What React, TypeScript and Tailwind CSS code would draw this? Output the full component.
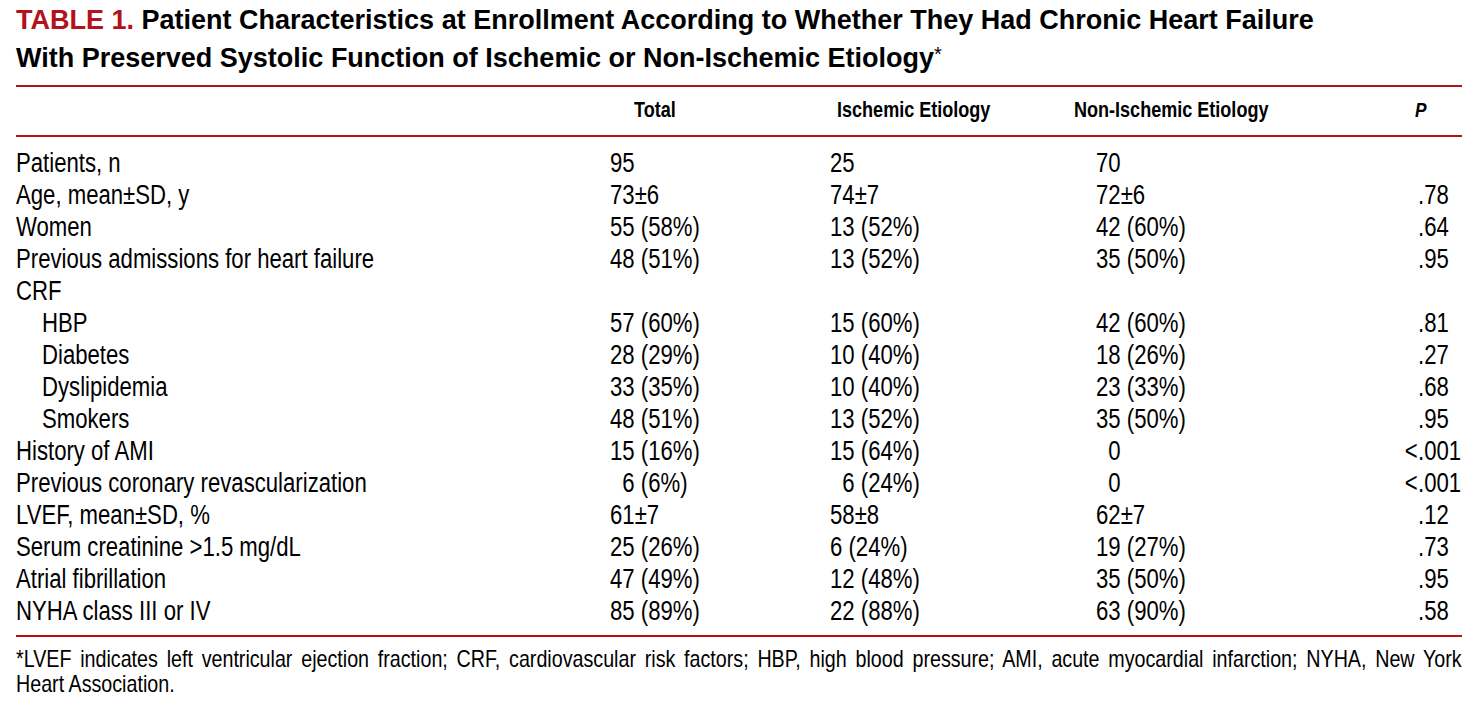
import React from 'react';

interface Row {
  label: string;
  indent?: boolean;
  total?: string;
  ischemic?: string;
  nonIschemic?: string;
  p?: string;
}

// figure space keeps single digits aligned with the units column
const FS = '\u2007';

const ROWS: Row[] = [
  { label: 'Patients, n', total: '95', ischemic: '25', nonIschemic: '70' },
  { label: 'Age, mean±SD, y', total: '73±6', ischemic: '74±7', nonIschemic: '72±6', p: '.78' },
  { label: 'Women', total: '55 (58%)', ischemic: '13 (52%)', nonIschemic: '42 (60%)', p: '.64' },
  { label: 'Previous admissions for heart failure', total: '48 (51%)', ischemic: '13 (52%)', nonIschemic: '35 (50%)', p: '.95' },
  { label: 'CRF' },
  { label: 'HBP', indent: true, total: '57 (60%)', ischemic: '15 (60%)', nonIschemic: '42 (60%)', p: '.81' },
  { label: 'Diabetes', indent: true, total: '28 (29%)', ischemic: '10 (40%)', nonIschemic: '18 (26%)', p: '.27' },
  { label: 'Dyslipidemia', indent: true, total: '33 (35%)', ischemic: '10 (40%)', nonIschemic: '23 (33%)', p: '.68' },
  { label: 'Smokers', indent: true, total: '48 (51%)', ischemic: '13 (52%)', nonIschemic: '35 (50%)', p: '.95' },
  { label: 'History of AMI', total: '15 (16%)', ischemic: '15 (64%)', nonIschemic: FS + '0', p: '<.001' },
  { label: 'Previous coronary revascularization', total: FS + '6 (6%)', ischemic: FS + '6 (24%)', nonIschemic: FS + '0', p: '<.001' },
  { label: 'LVEF, mean±SD, %', total: '61±7', ischemic: '58±8', nonIschemic: '62±7', p: '.12' },
  { label: 'Serum creatinine >1.5 mg/dL', total: '25 (26%)', ischemic: '6 (24%)', nonIschemic: '19 (27%)', p: '.73' },
  { label: 'Atrial fibrillation', total: '47 (49%)', ischemic: '12 (48%)', nonIschemic: '35 (50%)', p: '.95' },
  { label: 'NYHA class III or IV', total: '85 (89%)', ischemic: '22 (88%)', nonIschemic: '63 (90%)', p: '.58' },
];

const COLS = 'grid grid-cols-[594px_220px_266px_302px_1fr]';

// 窄体字：Arial 横向压缩，近似 Helvetica Condensed
const Narrow: React.FC<{ children?: React.ReactNode; right?: boolean }> = ({ children, right }) => (
  <span className={`inline-block whitespace-pre scale-x-[0.82] ${right ? 'origin-right' : 'origin-left'}`}>
    {children}
  </span>
);

// P values are aligned on the decimal point
const PValue: React.FC<{ value?: string }> = ({ value }) => {
  if (!value) return <div />;
  const prefix = value.startsWith('<') ? '<' : '';
  const rest = prefix ? value.slice(1) : value;
  return (
    <div className="flex">
      <span className="w-[20px] text-right">{prefix && <Narrow right>{prefix}</Narrow>}</span>
      <Narrow>{rest}</Narrow>
    </div>
  );
};

const App: React.FC = () => {
  return (
    <div className="w-[1478px] h-[701px] bg-white px-4 text-black overflow-hidden font-['Liberation_Sans',Arial,sans-serif]">
      {/* 标题 */}
      <div className="pt-[3px] font-bold text-[27px] leading-[34px]">
        <div>
          <span className="text-[#b3121c]">TABLE 1.</span> Patient Characteristics at Enrollment According to Whether They Had Chronic Heart Failure
        </div>
        <div>
          With Preserved Systolic Function of Ischemic or Non-Ischemic Etiology
          <span className="font-normal text-[20px] align-[6px]">*</span>
        </div>
      </div>

      <div className="mt-[10px] h-[2px] bg-[#b3121c]" />

      {/* 表头 */}
      <div className={`${COLS} font-bold text-[22px] leading-[26px] pt-[10px] pb-[12px]`}>
        <div />
        <div className="pl-[24px]"><Narrow>Total</Narrow></div>
        <div className="pl-[7px]"><Narrow>Ischemic Etiology</Narrow></div>
        <div className="-ml-[22px]"><Narrow>Non-Ischemic Etiology</Narrow></div>
        <div className="pl-[17px] italic text-[21px]"><Narrow>P</Narrow></div>
      </div>

      <div className="h-[2px] bg-[#b3121c]" />

      {/* 数据行 */}
      <div className="text-[27px] leading-[32px] pt-[10px] pb-[8px]">
        {ROWS.map((row) => (
          <div key={row.label} className={`${COLS} h-[32px]`}>
            <div className={row.indent ? 'pl-[26px]' : ''}><Narrow>{row.label}</Narrow></div>
            <div><Narrow>{row.total}</Narrow></div>
            <div><Narrow>{row.ischemic}</Narrow></div>
            <div><Narrow>{row.nonIschemic}</Narrow></div>
            <PValue value={row.p} />
          </div>
        ))}
      </div>

      <div className="h-[2px] bg-[#b3121c]" />

      {/* 脚注 */}
      <div className="text-[24px] leading-[25px] mt-[9px]">
        <div className="w-[1763px] origin-left scale-x-[0.82] whitespace-nowrap text-justify [text-align-last:justify]">
          *LVEF indicates left ventricular ejection fraction; CRF, cardiovascular risk factors; HBP, high blood pressure; AMI, acute myocardial infarction; NYHA, New York
        </div>
        <div><Narrow>Heart Association.</Narrow></div>
      </div>
    </div>
  );
};

export default App;
